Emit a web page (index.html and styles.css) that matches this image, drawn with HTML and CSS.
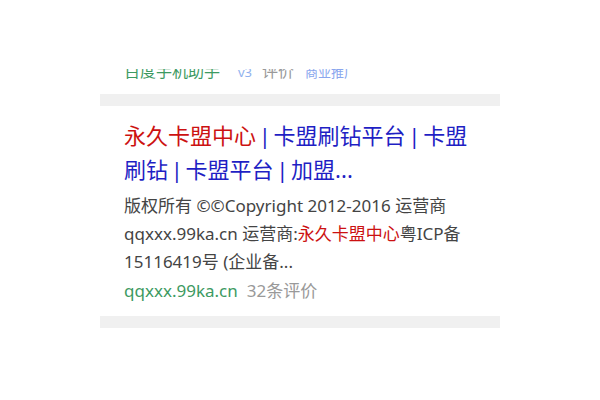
FILE: index.html
```html
<!DOCTYPE html>
<html lang="zh-CN">
<head>
<meta charset="utf-8">
<link rel="stylesheet" href="styles.css">
</head>
<body>
<div class="list">
  <div class="peek">
    <div class="peek-clip">
      <div class="peek-line">
        <span class="src">百度手机助手</span>
        <span class="ver">v3</span>
        <span class="rate">评价</span>
        <span class="ad">商业推广</span>
      </div>
    </div>
  </div>
  <div class="sep"></div>
  <div class="card">
    <div class="title"><span class="hl">永久卡盟中心</span> | 卡盟刷钻平台 | 卡盟刷钻 | 卡盟平台 | 加盟...</div>
    <div class="desc">版权所有 ©©Copyright 2012-2016 运营商 qqxxx.99ka.cn 运营商:<span class="hl">永久卡盟中心</span>粤ICP备15116419号 (企业备...</div>
    <div class="meta"><span class="url">qqxxx.99ka.cn</span><span class="count">32条评价</span></div>
  </div>
  <div class="sep"></div>
</div>
</body>
</html>
```
FILE: styles.css
```css
html, body {
  margin: 0;
  padding: 0;
  background: #fff;
}
body {
  font-family: "Noto Sans", "Noto Sans CJK SC", sans-serif;
}
.list {
  width: 400px;
  margin-left: 100px;
}
.peek {
  height: 94px;
  display: flex;
  flex-direction: column;
  justify-content: flex-end;
}
.peek-clip {
  height: 25px;
  overflow: hidden;
  padding: 0 25px 0 24px;
}
.peek-line {
  margin-top: -11px;
  line-height: 27px;
  font-size: 16px;
  display: flex;
  align-items: baseline;
  white-space: nowrap;
}
.src { color: #3d9a62; }
.ver { color: #8fb1ee; font-size: 13px; margin-left: 18px; }
.rate { color: #999; margin-left: 10px; }
.ad { color: #8aa6ee; font-size: 13px; margin-left: 11px; }
.sep {
  height: 12px;
  background: #f0f0f0;
}
.card {
  padding: 12px 25px 11px 24px;
}
.title {
  font-size: 22px;
  line-height: 34px;
  color: #1f1fc4;
  word-spacing: -3px;
}
.hl { color: #cc1111; }
.desc {
  margin-top: 6px;
  font-size: 17px;
  line-height: 28px;
  color: #444;
}
.meta {
  font-size: 17px;
  line-height: 28px;
  margin-top: 1px;
  white-space: nowrap;
}
.url { color: #3d9a62; }
.count { color: #999; margin-left: 9px; }
```
